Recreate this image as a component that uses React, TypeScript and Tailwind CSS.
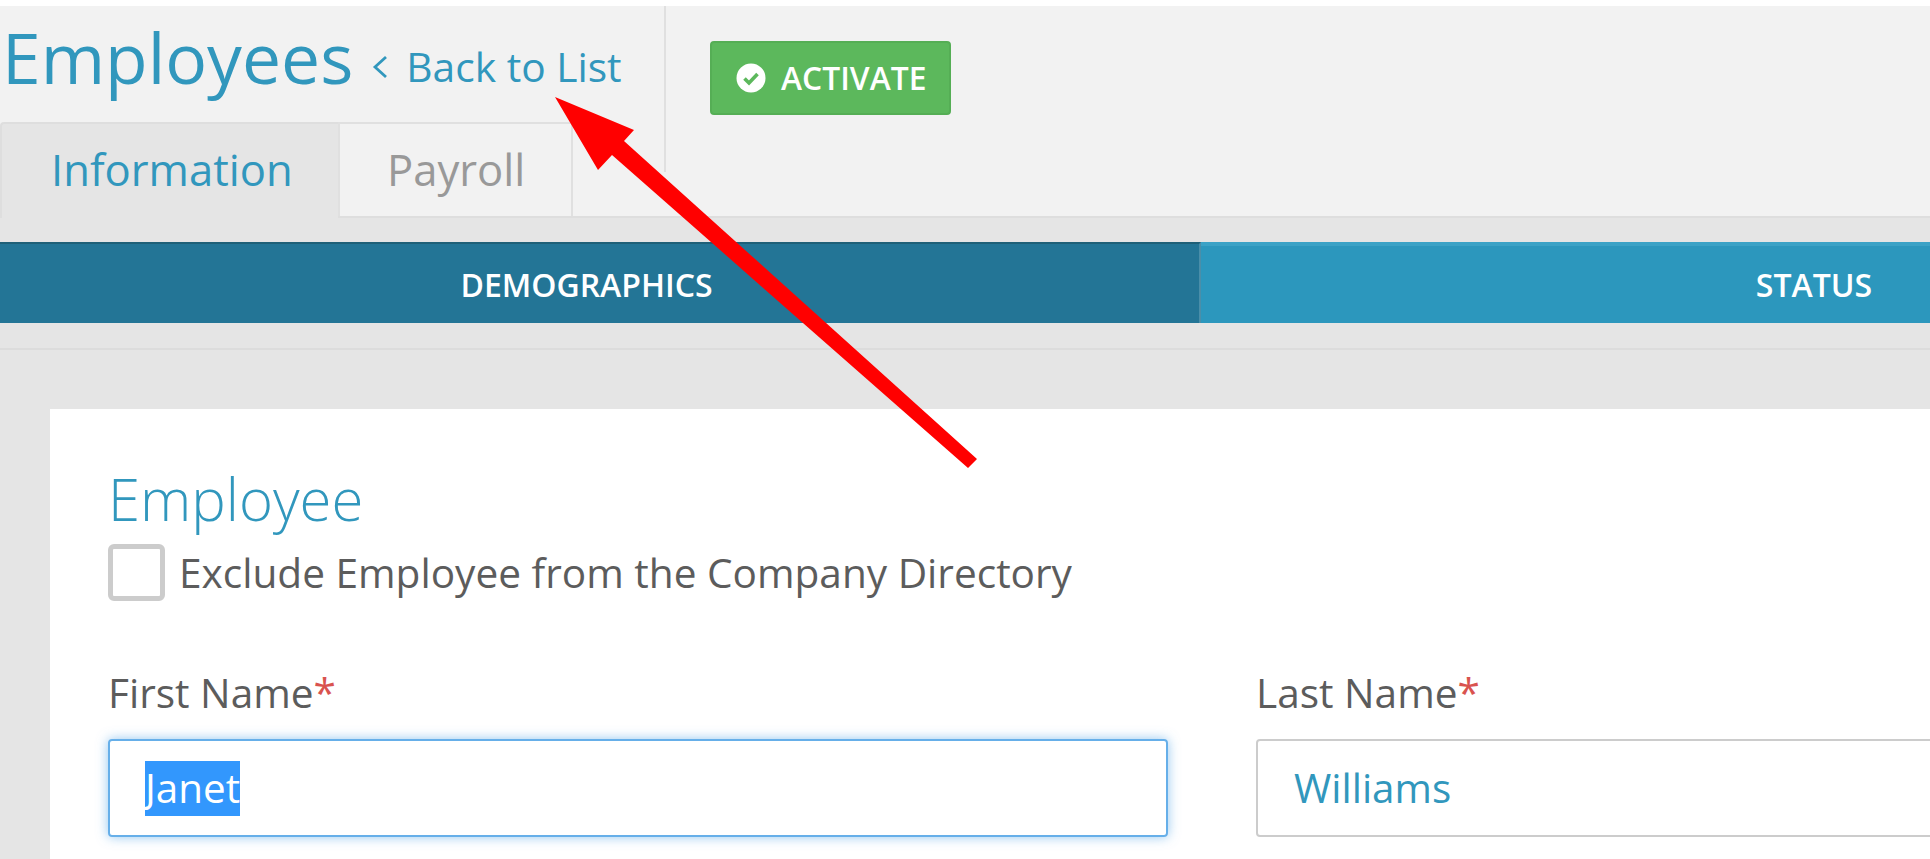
export default function App() {
  return (
    <div className="relative w-[1930px] h-[859px] overflow-hidden bg-white font-['Open_Sans',sans-serif]">
      <div className="h-[6px] bg-white" />
      <div className="flex h-[212px] bg-[#f2f2f2] border-b-2 border-[#dedede]">
        <div className="w-[666px] h-[166px] shrink-0 border-r-2 border-[#e0e0e0]">
          <div className="flex items-baseline h-[116px] pl-[2px] pt-[6px] text-[#3197bd]">
            <span className="text-[69.6px] leading-[90px]">Employees</span>
            <svg className="ml-[19px] self-center mt-[0px] w-[16px] h-[24px]" viewBox="0 0 16 24" fill="none" stroke="#3197bd" strokeWidth="2.8"><path d="M14 2 3 12l11 10" /></svg>
            <span className="ml-[18px] -translate-y-[2px] text-[40.7px] leading-[50px]">Back to List</span>
          </div>
          <div className="flex h-[95px]">
            <div className="w-[338px] h-[96px] pl-[49px] pt-[15px] bg-[#e5e5e5] border-l-2 border-t-2 border-[#dedede] rounded-tl-[4px] text-[43.6px] leading-[60px] text-[#3197bd]">Information</div>
            <div className="w-[235px] h-[94px] pl-[47px] pt-[15px] bg-[#f2f2f2] border-x-2 border-t-2 border-[#e0e0e0] text-[43.6px] leading-[60px] text-[#999999]">Payroll</div>
          </div>
        </div>
        <div className="pl-[44px] pt-[35px]">
          <div className="flex items-center w-[241px] h-[74px] pl-[24px] gap-[15px] bg-[#5cb85c] border-2 border-[#55ae55] rounded-[4px] text-white">
            <svg className="w-[30px] h-[30px]" viewBox="0 0 30 30"><circle cx="15" cy="15" r="14.5" fill="#ffffff" /><path d="M8.5 15.5l4.5 4.5 8.5-9" fill="none" stroke="#5cb85c" strokeWidth="3.6" /></svg>
            <span className="text-[31.8px] leading-[40px] font-semibold">ACTIVATE</span>
          </div>
        </div>
      </div>
      <div className="h-[24px] bg-[#e5e5e5]" />
      <div className="flex h-[81px] text-white text-[32px] font-semibold overflow-hidden">
        <div className="flex items-center justify-center w-[1201px] shrink-0 pr-[26px] pt-[2px] bg-[#237596] border-t-2 border-[#1f6078] border-r-2 border-r-[#4a8ea9]">DEMOGRAPHICS</div>
        <div className="flex items-center justify-center w-[1226px] shrink-0 bg-[#2c97bd] border-t-[4px] border-[#3ba2c6]">STATUS</div>
      </div>
      <div className="h-[27px] bg-[#e5e5e5] border-b-2 border-[#dcdcdc]" />
      <div className="flex h-[510px] bg-[#e5e5e5]">
        <div className="w-[50px] shrink-0" />
        <div className="flex-1 mt-[59px] bg-white pl-[58px] pt-[52px]">
          <div className="text-[58px] leading-[76px] font-light text-[#3197bd]">Employee</div>
          <div className="flex items-center h-[62px] mt-[4px]">
            <div className="w-[57px] h-[57px] border-[5px] border-[#cccccc] rounded-[6px]" />
            <span className="ml-[14px] pt-[2px] text-[40.6px] leading-[54px] text-[#5c5c5c]">Exclude Employee from the Company Directory</span>
          </div>
          <div className="flex gap-[88px] mt-[63px]">
            <div className="w-[1060px] shrink-0">
              <div className="h-[73px] text-[40.6px] leading-[54px] text-[#5c5c5c]">First Name<span className="text-[#d9534f]">*</span></div>
              <div className="flex items-center h-[98px] pl-[35px] border-2 border-[#66afe9] rounded-[4px] shadow-[0_0_12px_rgba(102,175,233,0.7)]">
                <span className="h-[55px] leading-[53px] bg-[#3297fd] text-white text-[40.4px]">Janet</span>
              </div>
            </div>
            <div className="w-[800px] shrink-0">
              <div className="h-[73px] text-[40.6px] leading-[54px] text-[#5c5c5c]">Last Name<span className="text-[#d9534f]">*</span></div>
              <div className="flex items-center h-[98px] pl-[36px] border-2 border-[#cccccc] rounded-[4px] text-[40.4px] text-[#3197bd]">Williams</div>
            </div>
          </div>
        </div>
      </div>
      <svg className="absolute left-0 top-0 pointer-events-none" width="1930" height="859" viewBox="0 0 1930 859">
        <polygon fill="#ff0000" points="555,97 634,130 624,141 977,459 968,468 612,155 598,170" />
      </svg>
    </div>
  );
}
